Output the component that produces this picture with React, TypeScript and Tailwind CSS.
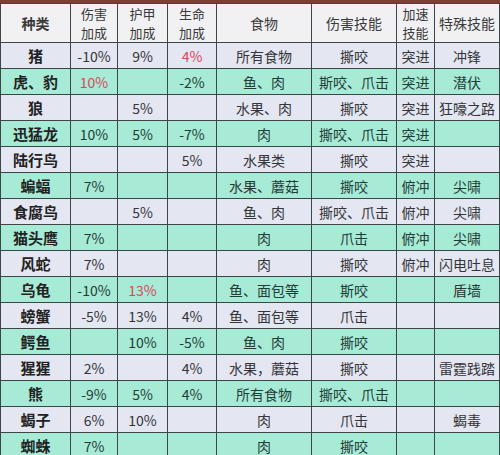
type Row = {
  name: string
  dmg?: string
  armor?: string
  hp?: string
  food: string
  skill: string
  dash?: string
  special?: string
  red?: 'dmg' | 'armor' | 'hp'
}

const rows: Row[] = [
  { name: '猪', dmg: '-10%', armor: '9%', hp: '4%', food: '所有食物', skill: '撕咬', dash: '突进', special: '冲锋', red: 'hp' },
  { name: '虎、豹', dmg: '10%', hp: '-2%', food: '鱼、肉', skill: '斯咬、爪击', dash: '突进', special: '潜伏', red: 'dmg' },
  { name: '狼', armor: '5%', food: '水果、肉', skill: '撕咬', dash: '突进', special: '狂嚎之路' },
  { name: '迅猛龙', dmg: '10%', armor: '5%', hp: '-7%', food: '肉', skill: '撕咬、爪击', dash: '突进' },
  { name: '陆行鸟', hp: '5%', food: '水果类', skill: '撕咬', dash: '突进' },
  { name: '蝙蝠', dmg: '7%', food: '水果、蘑菇', skill: '撕咬', dash: '俯冲', special: '尖啸' },
  { name: '食腐鸟', armor: '5%', food: '鱼、肉', skill: '撕咬、爪击', dash: '俯冲', special: '尖啸' },
  { name: '猫头鹰', dmg: '7%', food: '肉', skill: '爪击', dash: '俯冲', special: '尖啸' },
  { name: '风蛇', dmg: '7%', food: '肉', skill: '撕咬', dash: '俯冲', special: '闪电吐息' },
  { name: '乌龟', dmg: '-10%', armor: '13%', food: '鱼、面包等', skill: '斯咬', special: '盾墙', red: 'armor' },
  { name: '螃蟹', dmg: '-5%', armor: '13%', hp: '4%', food: '鱼、面包等', skill: '爪击' },
  { name: '鳄鱼', armor: '10%', hp: '-5%', food: '鱼、肉', skill: '撕咬' },
  { name: '猩猩', dmg: '2%', hp: '4%', food: '水果，蘑菇', skill: '撕咬', special: '雷霆践踏' },
  { name: '熊', dmg: '-9%', armor: '5%', hp: '4%', food: '所有食物', skill: '撕咬、爪击' },
  { name: '蝎子', dmg: '6%', armor: '10%', food: '肉', skill: '爪击', special: '蝎毒' },
  { name: '蜘蛛', dmg: '7%', food: '肉', skill: '撕咬' },
]

const cell = 'border-[1.5px] border-[#3b4646] p-0 text-center align-middle whitespace-nowrap'
// two-line header labels
const stack = `${cell} font-normal text-[13px] leading-[19px]`

export default function App() {
  return (
    <div
      className="w-[500px] h-[455px] overflow-hidden bg-[#e9ebf3]"
      style={{ fontFamily: '"Noto Sans CJK SC", "Liberation Sans", sans-serif' }}
    >
      <div className="h-[3px] bg-[#7b3f2f]" />
      <table className="table-fixed border-collapse w-[499px] text-[14px] leading-none">
        <colgroup>
          <col className="w-[70px]" />
          <col className="w-[47px]" />
          <col className="w-[50px]" />
          <col className="w-[49px]" />
          <col className="w-[95px]" />
          <col className="w-[85px]" />
          <col className="w-[38px]" />
          <col className="w-[65px]" />
        </colgroup>
        <thead>
          <tr className="h-[38px] bg-[#f1f1f3] text-[#3a3a3a]">
            <th className={`${cell} font-bold`}>种类</th>
            <th className={stack}>伤害<br />加成</th>
            <th className={stack}>护甲<br />加成</th>
            <th className={stack}>生命<br />加成</th>
            <th className={`${cell} font-normal`}>食物</th>
            <th className={`${cell} font-normal`}>伤害技能</th>
            <th className={stack}>加速<br />技能</th>
            <th className={`${cell} font-normal`}>特殊技能</th>
          </tr>
        </thead>
        <tbody>
          {rows.map((r, i) => {
            const mint = i % 2 === 1
            const tone = mint ? 'bg-[#a7ead6] text-[#1f3d36]' : 'bg-[#e4e6f1] text-[#333538]'
            const red = 'text-[#d9485c]'
            return (
              <tr key={r.name} className={`h-[26px] ${tone}`}>
                <td className={`${cell} font-bold text-[15px] text-[#222]`}>{r.name}</td>
                <td className={`${cell} ${r.red === 'dmg' ? red : ''}`}>{r.dmg}</td>
                <td className={`${cell} ${r.red === 'armor' ? red : ''}`}>{r.armor}</td>
                <td className={`${cell} ${r.red === 'hp' ? red : ''}`}>{r.hp}</td>
                <td className={cell}>{r.food}</td>
                <td className={cell}>{r.skill}</td>
                <td className={cell}>{r.dash}</td>
                <td className={cell}>{r.special}</td>
              </tr>
            )
          })}
        </tbody>
      </table>
    </div>
  )
}
